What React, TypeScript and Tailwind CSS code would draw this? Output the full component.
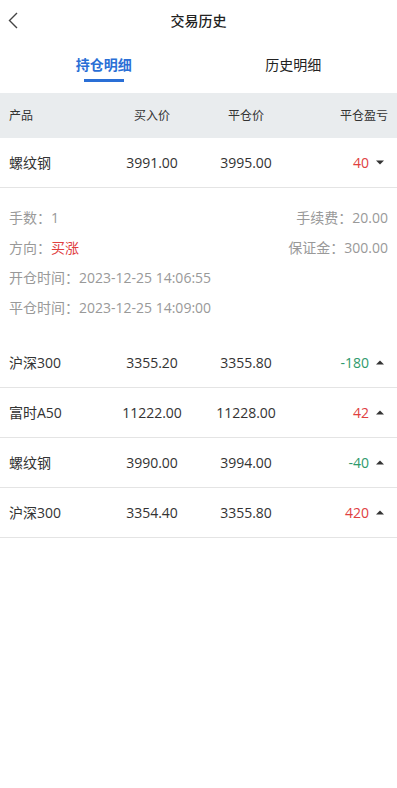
import React from "react";

type Row = { name: string; buy: string; close: string; pl: string; up: boolean; open?: boolean };

const rows: Row[] = [
  { name: "螺纹钢", buy: "3991.00", close: "3995.00", pl: "40", up: true, open: true },
  { name: "沪深300", buy: "3355.20", close: "3355.80", pl: "-180", up: false },
  { name: "富时A50", buy: "11222.00", close: "11228.00", pl: "42", up: true },
  { name: "螺纹钢", buy: "3990.00", close: "3994.00", pl: "-40", up: false },
  { name: "沪深300", buy: "3354.40", close: "3355.80", pl: "420", up: true },
];

function Caret({ down }: { down: boolean }) {
  return (
    <svg width="8" height="5" viewBox="0 0 8 5" className="ml-[7px]">
      {down ? <path d="M0 0.5 L8 0.5 L4 4.5 Z" fill="#333" /> : <path d="M0 4.5 L8 4.5 L4 0.5 Z" fill="#333" />}
    </svg>
  );
}

export default function App() {
  return (
    <div
      className="w-[397px] min-h-[788px] bg-white text-[#333]"
      style={{ fontFamily: '"Open Sans", "Noto Sans CJK SC", sans-serif' }}
    >
      {/* header */}
      <div className="relative h-[40px] flex items-center justify-center">
        <svg width="10" height="17" viewBox="0 0 10 17" className="absolute left-[8px] top-[12px]">
          <path d="M9 1 L1.5 8.5 L9 16" stroke="#444" strokeWidth="1.4" fill="none" />
        </svg>
        <span className="text-[14px] font-medium text-[#222]">交易历史</span>
      </div>
      {/* tabs */}
      <div className="h-[53px] flex px-[9px]">
        <div className="flex-1 flex flex-col items-center pt-[14px]">
          <span className="text-[14px] leading-[22px] font-semibold text-[#2a6fd6]">持仓明细</span>
          <div className="mt-[3px] w-[40px] h-[3px] bg-[#2a6fd6]" />
        </div>
        <div className="flex-1 flex flex-col items-center pt-[14px]">
          <span className="text-[14px] leading-[22px] text-[#222]">历史明细</span>
        </div>
      </div>
      {/* table header */}
      <div className="h-[45px] bg-[#e9ecee] grid grid-cols-[100px_86px_102px_1fr] items-center px-[9px] text-[12px] text-[#333]">
        <span>产品</span>
        <span className="text-center">买入价</span>
        <span className="text-center">平仓价</span>
        <span className="text-right">平仓盈亏</span>
      </div>
      {rows.map((r, i) => (
        <div key={i}>
          <div className="h-[50px] grid grid-cols-[100px_86px_102px_1fr] items-center px-[9px] text-[14px] text-[#333] border-b border-[#e4e4e4]">
            <span>{r.name}</span>
            <span className="text-center">{r.buy}</span>
            <span className="text-center">{r.close}</span>
            <span className="flex items-center justify-end pr-[4px]">
              <span className={r.up ? "text-[#e0403f]" : "text-[#2e9a6c]"}>{r.pl}</span>
              <Caret down={!!r.open} />
            </span>
          </div>
          {r.open && (
            <div className="px-[9px] pt-[15px] pb-[15px] text-[14px] leading-[30px] text-[#999]">
              <div className="flex justify-between">
                <span>手数：1</span>
                <span>手续费：20.00</span>
              </div>
              <div className="flex justify-between">
                <span>
                  方向：<span className="text-[#e0403f]">买涨</span>
                </span>
                <span>保证金：300.00</span>
              </div>
              <div>开仓时间：2023-12-25 14:06:55</div>
              <div>平仓时间：2023-12-25 14:09:00</div>
            </div>
          )}
        </div>
      ))}
    </div>
  );
}
